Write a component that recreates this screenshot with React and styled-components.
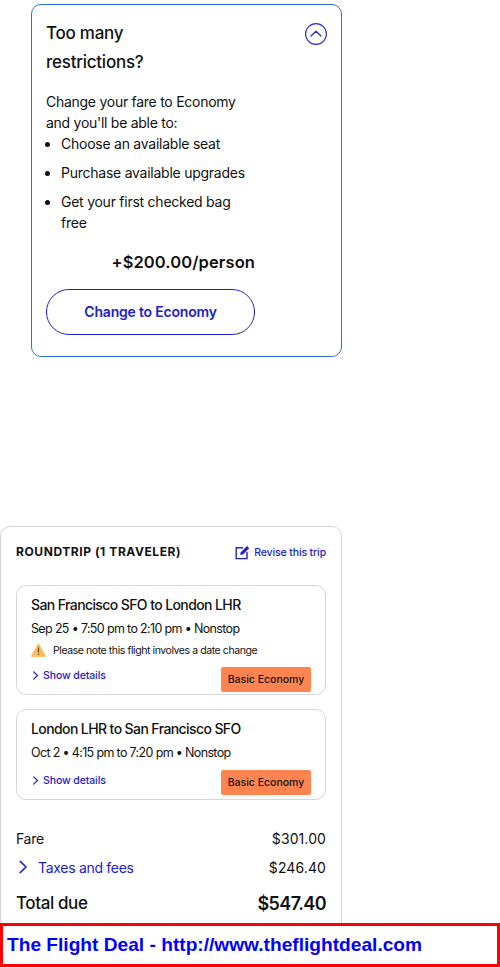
import React from "react";
import styled, { createGlobalStyle } from "styled-components";

const Global = createGlobalStyle`
  html, body { margin: 0; padding: 0; background: #fff; }
  body { font-family: Inter, "Liberation Sans", sans-serif; color: #111; }
  * { box-sizing: border-box; }
`;
const Page = styled.div`
  position: relative;
  width: 500px;
  height: 967px;
  overflow: hidden;
  padding-top: 4px;
`;
const Offer = styled.section`
  width: 311px;
  height: 353px;
  margin-left: 31px;
  border: 1px solid #2f6fe4;
  border-radius: 10px;
  padding: 14px 14px 0;
`;
const OfferHead = styled.div`
  display: flex;
  justify-content: space-between;
  align-items: flex-start;
`;
const OfferTitle = styled.h2`
  margin: 0;
  width: 130px;
  font-size: 17px;
  font-weight: 500;
  line-height: 29px;
  letter-spacing: -0.25px;
`;
const Toggle = styled.span`
  display: flex;
  margin-top: 4px;
  color: #2a2ad0;
`;
const OfferText = styled.p`
  margin: 14px 0 0;
  font-size: 14px;
  line-height: 21px;
  letter-spacing: -0.27px;
  width: 205px;
`;
const Perks = styled.ul`
  margin: 0;
  padding: 0 0 0 15px;
  width: 205px;
  font-size: 14px;
  line-height: 21px;
  letter-spacing: -0.25px;
`;
const Perk = styled.li`
  margin-bottom: 8px;
  &:last-child { margin-bottom: 0; }
`;
const Price = styled.div`
  width: 209px;
  margin-top: 18px;
  text-align: right;
  font-size: 16.5px;
  line-height: 22px;
  font-weight: 600;
  letter-spacing: 0.1px;
`;
const ChangeButton = styled.button`
  display: block;
  width: 209px;
  height: 46px;
  margin-top: 16px;
  padding: 0 0 2px;
  border: 1px solid #2020c8;
  border-radius: 23px;
  background: #fff;
  color: #2020c8;
  font: 600 14px Inter, "Liberation Sans", sans-serif;
  letter-spacing: -0.2px;
`;
const Summary = styled.section`
  width: 342px;
  height: 460px;
  margin-top: 169px;
  border: 1px solid #d4d4d4;
  border-radius: 10px;
  padding: 14px 15px 0;
`;
const SummaryHead = styled.div`
  display: flex;
  justify-content: space-between;
  align-items: center;
  height: 20px;
  margin-bottom: 24px;
`;
const SummaryTitle = styled.h3`
  margin: 0;
  font-size: 12px;
  font-weight: 700;
  letter-spacing: 0.58px;
`;
const Revise = styled.a`
  display: flex;
  align-items: center;
  gap: 4px;
  margin-top: 3px;
  color: #2020c8;
  font-size: 10.5px;
  font-weight: 500;
  letter-spacing: -0.13px;
`;
const Flight = styled.article`
  height: ${p => p.$h}px;
  margin-bottom: 14px;
  border: 1px solid #d6d6d6;
  border-radius: 10px;
  padding: 10px 14px 0;
`;
const FlightTitle = styled.div`
  font-size: 14px;
  font-weight: 500;
  line-height: 18px;
  letter-spacing: -0.6px;
`;
const FlightTimes = styled.div`
  margin-top: 7px;
  font-size: 12.5px;
  line-height: 16px;
  letter-spacing: -0.65px;
`;
const Warning = styled.div`
  display: flex;
  align-items: center;
  gap: 7px;
  margin-top: 5px;
  height: 16px;
  font-size: 10.5px;
  letter-spacing: -0.42px;
`;
const FlightFoot = styled.div`
  display: flex;
  justify-content: space-between;
  align-items: flex-start;
  margin-top: ${p => p.$top}px;
`;
const Details = styled.a`
  display: flex;
  align-items: center;
  gap: 3px;
  margin-top: ${p => p.$top}px;
  color: #2020c8;
  font-size: 10.5px;
  font-weight: 500;
  letter-spacing: -0.1px;
`;
const FareBadge = styled.span`
  display: flex;
  align-items: center;
  justify-content: center;
  width: 90px;
  height: 25px;
  border-radius: 2px;
  background: #ff8450;
  font-size: 10.5px;
  font-weight: 500;
`;
const Totals = styled.div`
  padding-top: 12px;
`;
const Row = styled.div`
  display: flex;
  justify-content: space-between;
  align-items: center;
  height: ${p => p.$h}px;
  font-size: 14px;
  letter-spacing: -0.3px;
`;
const Amount = styled.span`
  letter-spacing: 0.1px;
`;
const TaxLabel = styled.span`
  display: flex;
  align-items: center;
  gap: 8px;
  color: #2020c8;
`;
const TotalRow = styled(Row)`
  font-size: 17px;
  font-weight: 500;
  letter-spacing: -0.4px;
`;
const TotalValue = styled.span`
  font-size: 18px;
  font-weight: 600;
  letter-spacing: -0.6px;
`;
const Banner = styled.div`
  position: absolute;
  left: 0;
  bottom: 0;
  width: 500px;
  height: 44px;
  display: flex;
  align-items: center;
  padding: 0 4px;
  border: 3px solid #ff0000;
  background: #fff;
  color: #0000ff;
  font: 700 19.15px "Liberation Sans", Arial, sans-serif;
`;

const ChevronRight = ({ size = 9, w = 1.4 }) => (
  <svg width={size} height={size} viewBox="0 0 10 10" fill="none" stroke="currentColor" strokeWidth={w} strokeLinecap="round" strokeLinejoin="round">
    <path d="M3 1l4.2 4L3 9" />
  </svg>
);

const FlightCard = ({ title, times, warn, h, foot, detailsTop }) => (
  <Flight $h={h}>
    <FlightTitle>{title}</FlightTitle>
    <FlightTimes>{times}</FlightTimes>
    {warn && (
      <Warning>
        <svg width="15" height="14" viewBox="0 0 15 14">
          <path d="M7.5 0.8L14.6 13.4H0.4z" fill="#f5bd5c" stroke="#f5bd5c" strokeLinejoin="round" />
          <path d="M7.5 4.5v5M7.5 10.8v1.2" stroke="#6b4a12" strokeWidth="1.2" />
        </svg>
        {warn}
      </Warning>
    )}
    <FlightFoot $top={foot}>
      <Details $top={detailsTop}><ChevronRight size={9} />Show details</Details>
      <FareBadge>Basic Economy</FareBadge>
    </FlightFoot>
  </Flight>
);

export default function App() {
  return (
    <Page>
      <Global />
      <Offer>
        <OfferHead>
          <OfferTitle>Too many restrictions?</OfferTitle>
          <Toggle>
            <svg width="22" height="22" viewBox="0 0 22 22" fill="none" stroke="currentColor" strokeWidth="1.1">
              <circle cx="11" cy="11" r="10.4" />
              <path d="M6 13l5-4.8 5 4.8" strokeWidth="1.3" strokeLinecap="round" strokeLinejoin="round" />
            </svg>
          </Toggle>
        </OfferHead>
        <OfferText>Change your fare to Economy and you'll be able to:</OfferText>
        <Perks>
          <Perk>Choose an available seat</Perk>
          <Perk>Purchase available upgrades</Perk>
          <Perk>Get your first checked bag free</Perk>
        </Perks>
        <Price>+$200.00/person</Price>
        <ChangeButton>Change to Economy</ChangeButton>
      </Offer>
      <Summary>
        <SummaryHead>
          <SummaryTitle>ROUNDTRIP (1 TRAVELER)</SummaryTitle>
          <Revise>
            <svg width="15" height="15" viewBox="0 0 15 15" fill="none" stroke="currentColor">
              <path d="M8 2.8H1.2v10.8H12V7" strokeWidth="1.4" />
              <path d="M5.2 10l.6-2.8L12 1l2.2 2.2L8 9.4z" fill="currentColor" stroke="none" />
            </svg>
            Revise this trip
          </Revise>
        </SummaryHead>
        <FlightCard h={110} foot={9} detailsTop={2} title="San Francisco SFO to London LHR" times="Sep 25 • 7:50 pm to 2:10 pm • Nonstop" warn="Please note this flight involves a date change" />
        <FlightCard h={91} foot={9} detailsTop={4} title="London LHR to San Francisco SFO" times="Oct 2 • 4:15 pm to 7:20 pm • Nonstop" />
        <Totals>
          <Row $h={24}><span>Fare</span><Amount>$301.00</Amount></Row>
          <Row $h={34}>
            <TaxLabel><ChevronRight size={14} w={1.1} />Taxes and fees</TaxLabel>
            <Amount>$246.40</Amount>
          </Row>
          <TotalRow $h={38}><span>Total due</span><TotalValue>$547.40</TotalValue></TotalRow>
        </Totals>
      </Summary>
      <Banner>The Flight Deal - http://www.theflightdeal.com</Banner>
    </Page>
  );
}
